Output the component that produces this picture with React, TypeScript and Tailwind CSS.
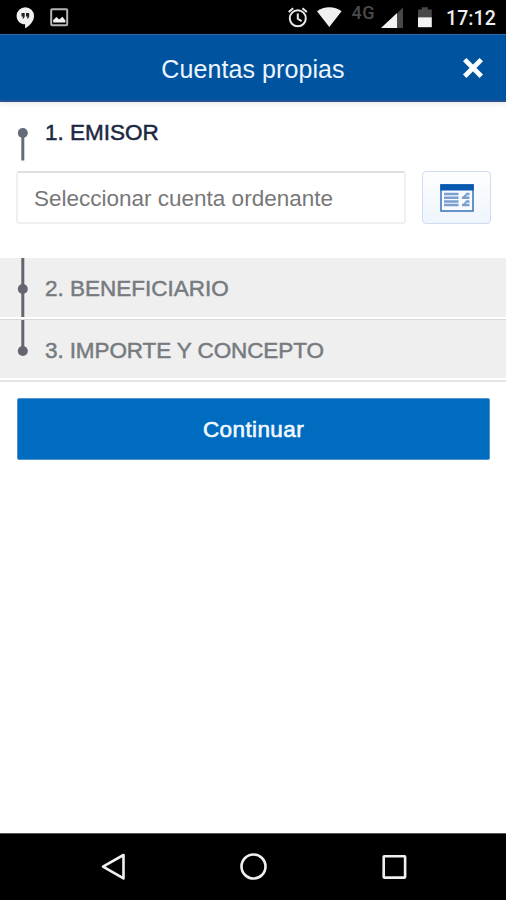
import type { ReactNode } from "react";

const StatusBar = () => {
  return (
    <div className="flex h-[34px] w-full shrink-0 items-center bg-black">
      <svg className="h-[34px] w-[90px]" viewBox="0 0 90 34">
        <path
          d="M25.300 7.200a8.700 8.700 0 0 0-8.700 8.700c0 4.700 3.800 8.400 8.500 8.400v4c4-2.300 8.900-6.900 8.900-12.400a8.700 8.700 0 0 0-8.700-8.700z"
          fill="#f2f2f2"
        />
        <path d="M21.500 13h3.200v3.500l-1 2h-1.300l.6-2h-1.500zM26 13h3.200v3.500l-1 2h-1.300l.6-2H26z" fill="#222" />
        <rect x="51.200" y="9.200" width="16" height="16" rx="1" fill="none" stroke="#b5b5b5" strokeWidth="2" />
        <path d="M53.200 22.500v-2.500l3.300-3 2.700 2.600 3.300-2.800 2.900 3.700v2z" fill="#f2f2f2" />
      </svg>
      <svg className="ml-auto h-[34px] w-[172px]" viewBox="270 0 172 34">
        <g fill="none" stroke="#e8e8e8" strokeWidth="2">
          <circle cx="297.800" cy="18.300" r="8" />
          <path d="M297.800 13.500v5.300l3.800 2.300" />
          <path d="M288.700 12l4.500-3.800M306.900 12l-4.500-3.800" />
        </g>
        <path d="M317 11.300c3.600-2.700 7.600-4.100 12.300-4.100s8.700 1.400 12.300 4.100L329.300 27z" fill="#f0f0f0" />
        <text
          x="351.500"
          y="18.700"
          fontSize="18"
          fontWeight="500"
          letterSpacing="0.6"
          fill="#4a4a4a"
          className="font-['Roboto',sans-serif]"
        >
          4G
        </text>
        <path d="M403 7.500V28H397V13.500z" fill="#484848" />
        <path d="M397 13V28H381z" fill="#f2f2f2" />
        <path d="M418 9.500h3.700V7.200h6.200v2.300h3.900V17.500H418z" fill="#484848" />
        <path d="M418 17.300h13.800v9.900H418z" fill="#f2f2f2" />
      </svg>
      <span className="w-[64px] pt-[3px] pl-1 font-['Roboto',sans-serif] text-[19.500px] leading-none font-medium tracking-[0.100px] text-[#eeeeee]">
        17:12
      </span>
    </div>
  );
};

const Header = () => {
  return (
    <header className="grid h-[68px] w-full shrink-0 grid-cols-[68px_1fr_68px] items-center border-t border-b-2 border-t-[#2b69a8] border-b-[#2b5090] bg-[#00549f] shadow-[0_1px_6px_rgba(60,40,80,0.14)]">
      <h1 className="col-start-2 pt-[3px] text-center text-[25px] leading-none tracking-[0.08px] text-[#eef5ff]">
        Cuentas propias
      </h1>
      <button type="button" aria-label="Cerrar" className="flex justify-center pl-[2px]">
        <svg className="h-[22px] w-[22px]" viewBox="0 0 22 22">
          <path d="M2.700 2.600L19.300 19.200M19.300 2.600L2.700 19.200" stroke="#fff" strokeWidth="4.800" />
        </svg>
      </button>
    </header>
  );
};

interface StepProps {
  marker: ReactNode;
  title: string;
  className: string;
  titleClass: string;
}

const Step = ({ marker, title, className, titleClass }: StepProps) => {
  return (
    <div className={`flex w-full shrink-0 ${className}`}>
      <svg className="h-[60px] w-[45px] shrink-0">{marker}</svg>
      <h2 className={`pt-px text-[22.5px] leading-[60px] [-webkit-text-stroke:0.5px_currentColor] ${titleClass}`}>
        {title}
      </h2>
    </div>
  );
};

const AccountIcon = () => {
  return (
    <svg className="h-[28px] w-[34px]" viewBox="0 0 34 28">
      <rect x="1" y="1" width="32" height="26" fill="#f7fbff" stroke="#4379bf" strokeWidth="1.600" />
      <path d="M0.300 0.200h33.400v6.300H0.300z" fill="#0759b0" />
      <path
        d="M4 10h14.500M4 13.700h14.500M4 17.400h14.500M4 21.100h14.500M26 10h3.500M22 13.700h7.500M26 17.400h3.500M22 21.100h7.500"
        stroke="#7c9fcf"
        strokeWidth="2.500"
      />
      <path d="M22 13.500l4.500-4.500v5zM22.500 21l3.500-4.500v4.500z" fill="#7c9fcf" />
    </svg>
  );
};

const NavigationBar = () => {
  return (
    <nav className="mt-auto h-[67px] w-full shrink-0 border-t border-[#555] bg-black">
      <svg className="h-[66px] w-full" viewBox="0 834 506 66" fill="none" stroke="#f0f0f0" strokeWidth="2.600">
        <path d="M103 866.700l20.500-11.700v23.400z" strokeLinejoin="round" />
        <circle cx="253.500" cy="866.500" r="12" />
        <rect x="383.700" y="856.200" width="21.400" height="21.400" rx="0.500" />
      </svg>
    </nav>
  );
};

const App = () => {
  return (
    <div className="flex h-[900px] w-[506px] flex-col overflow-hidden bg-white font-['Liberation_Sans',Arial,sans-serif]">
      <StatusBar />
      <Header />
      <Step
        title="1. EMISOR"
        className="h-[69px]"
        titleClass="text-[#1c2744]"
        marker={
          <>
            <path d="M22.800 31V58.500" stroke="#656b78" strokeWidth="3" />
            <circle cx="22.800" cy="31" r="5" fill="#656b78" />
          </>
        }
      />
      <div className="flex h-[87px] shrink-0 gap-4 pr-[15px] pl-[16px]">
        <input
          type="text"
          placeholder="Seleccionar cuenta ordenante"
          className="h-[53px] w-[390px] rounded-[3px] border-2 border-[#f0f0f0] border-t-[#e0e0e0] bg-white px-4 pt-[3px] text-[22.5px] text-[#777] outline-none placeholder:text-[#777]"
        />
        <button
          type="button"
          aria-label="Cuentas"
          className="flex h-[53px] w-[69px] items-center justify-center rounded-[4px] border border-[#cedcf0] bg-linear-to-b from-[#fdfeff] to-[#eff5fc]"
        >
          <AccountIcon />
        </button>
      </div>
      <Step
        title="2. BENEFICIARIO"
        className="h-[59px] bg-[#efefef]"
        titleClass="text-[#777b7f]"
        marker={
          <>
            <path d="M22.800 0V59" stroke="#656570" strokeWidth="3" />
            <circle cx="22.800" cy="31" r="5" fill="#656570" />
          </>
        }
      />
      <div className="h-[3px] shrink-0 border-b border-[#d8d8d8] bg-white" />
      <Step
        title="3. IMPORTE Y CONCEPTO"
        className="h-[58px] bg-[#efefef]"
        titleClass="tracking-[-0.100px] text-[#777b7f]"
        marker={
          <>
            <path d="M22.800 0V31" stroke="#656570" strokeWidth="3" />
            <circle cx="22.800" cy="31" r="5" fill="#656570" />
          </>
        }
      />
      <div className="h-[4px] shrink-0 border-b-2 border-[#e4e4e4] bg-white" />
      <div className="pt-4 pr-4 pl-[17px]">
        <button
          type="button"
          className="h-[62px] w-full rounded-[2px] border border-[#5590d0] bg-[#006cc0] pt-[2px] text-[22.500px] tracking-[0.400px] text-[#f2f8ff] [-webkit-text-stroke:0.6px_currentColor]"
        >
          Continuar
        </button>
      </div>
      <NavigationBar />
    </div>
  );
};

export default App;
